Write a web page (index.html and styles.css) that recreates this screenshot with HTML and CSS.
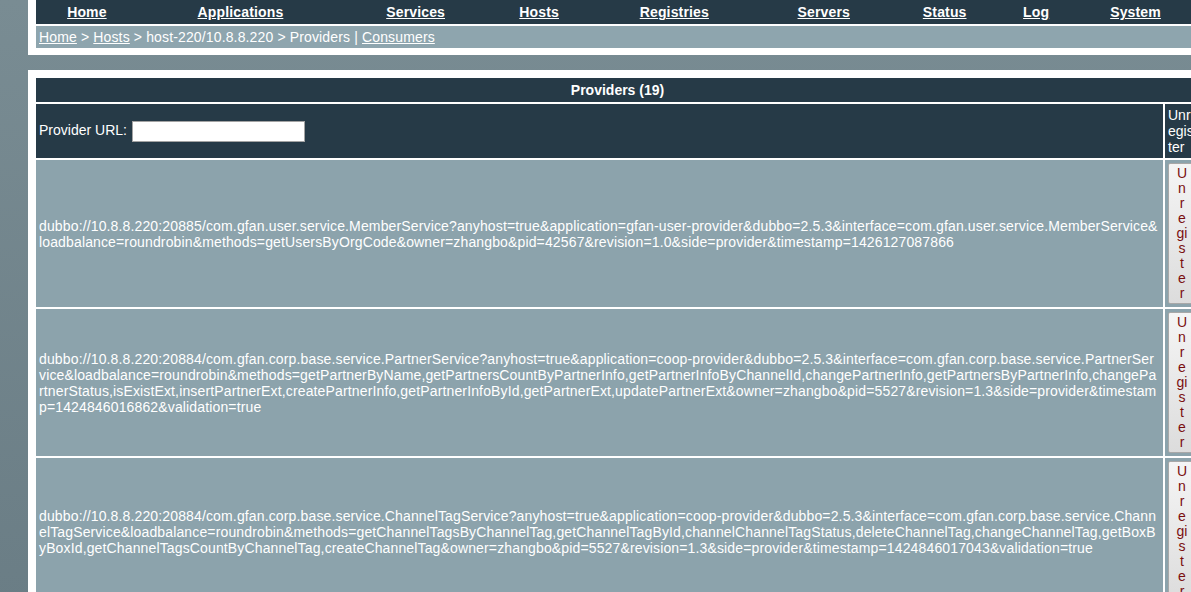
FILE: index.html
```html
<!DOCTYPE html>
<html>
<head>
<meta charset="utf-8">
<title>Providers</title>
<link rel="stylesheet" href="styles.css">
</head>
<body>
<div class="page">
  <div class="box top">
    <table class="nav">
      <tr>
        <td><a href="#">Home</a></td>
        <td><a href="#">Applications</a></td>
        <td><a href="#">Services</a></td>
        <td><a href="#">Hosts</a></td>
        <td><a href="#">Registries</a></td>
        <td><a href="#">Servers</a></td>
        <td><a href="#">Status</a></td>
        <td><a href="#">Log</a></td>
        <td><a href="#">System</a></td>
      </tr>
    </table>
    <div class="crumb"><a href="#">Home</a> &gt; <a href="#">Hosts</a> &gt; host-220/10.8.8.220 &gt; Providers | <a href="#">Consumers</a></div>
  </div>
  <div class="box main">
    <table class="list">
      <colgroup><col class="c-url"><col class="c-op"></colgroup>
      <thead>
        <tr><th colspan="2" class="title">Providers (19)</th></tr>
        <tr class="head">
          <td>Provider URL: <input type="text" class="filter"></td>
          <td class="op-head">Unregister</td>
        </tr>
      </thead>
      <tbody>
        <tr class="row">
          <td>dubbo://10.8.8.220:20885/com.gfan.user.service.MemberService?anyhost=true&amp;application=gfan-user-provider&amp;dubbo=2.5.3&amp;interface=com.gfan.user.service.MemberService&amp;loadbalance=roundrobin&amp;methods=getUsersByOrgCode&amp;owner=zhangbo&amp;pid=42567&amp;revision=1.0&amp;side=provider&amp;timestamp=1426127087866</td>
          <td><button class="btn">U<br>n<br>r<br>e<br>gi<br>s<br>t<br>e<br>r</button></td>
        </tr>
        <tr class="row">
          <td>dubbo://10.8.8.220:20884/com.gfan.corp.base.service.PartnerService?anyhost=true&amp;application=coop-provider&amp;dubbo=2.5.3&amp;interface=com.gfan.corp.base.service.PartnerService&amp;loadbalance=roundrobin&amp;methods=getPartnerByName,getPartnersCountByPartnerInfo,getPartnerInfoByChannelId,changePartnerInfo,getPartnersByPartnerInfo,changePartnerStatus,isExistExt,insertPartnerExt,createPartnerInfo,getPartnerInfoById,getPartnerExt,updatePartnerExt&amp;owner=zhangbo&amp;pid=5527&amp;revision=1.3&amp;side=provider&amp;timestamp=1424846016862&amp;validation=true</td>
          <td><button class="btn">U<br>n<br>r<br>e<br>gi<br>s<br>t<br>e<br>r</button></td>
        </tr>
        <tr class="row">
          <td>dubbo://10.8.8.220:20884/com.gfan.corp.base.service.ChannelTagService?anyhost=true&amp;application=coop-provider&amp;dubbo=2.5.3&amp;interface=com.gfan.corp.base.service.ChannelTagService&amp;loadbalance=roundrobin&amp;methods=getChannelTagsByChannelTag,getChannelTagById,channelChannelTagStatus,deleteChannelTag,changeChannelTag,getBoxByBoxId,getChannelTagsCountByChannelTag,createChannelTag&amp;owner=zhangbo&amp;pid=5527&amp;revision=1.3&amp;side=provider&amp;timestamp=1424846017043&amp;validation=true</td>
          <td><button class="btn">U<br>n<br>r<br>e<br>gi<br>s<br>t<br>e<br>r</button></td>
        </tr>
      </tbody>
    </table>
  </div>
</div>
</body>
</html>
```

FILE: styles.css
```css
html {
  overflow: hidden;
}

body {
  margin: 0;
  min-height: 100vh;
  background: linear-gradient(#798c93, #6a7d85);
  font-family: "Liberation Sans", Arial, sans-serif;
  font-size: 14px;
  color: #fff;
}

.page {
  margin-left: 28px;
  width: 1179px;
}

.box {
  background: #fff;
}

.top {
  padding: 0 8px 7px;
  margin-bottom: 15px;
}

.nav {
  width: 100%;
  height: 24px;
  border-collapse: collapse;
  background: #263a47;
}

.nav td {
  padding: 0 3px;
  text-align: center;
  font-weight: bold;
  letter-spacing: 0.15px;
}

.nav a {
  color: #fff;
}

.crumb {
  margin-top: 2px;
  height: 22px;
  line-height: 22px;
  padding-left: 3px;
  background: #8ea5ae;
  letter-spacing: 0.14px;
}

.crumb a {
  color: #fff;
}

.main {
  padding: 6px;
}

.list {
  width: 100%;
  table-layout: fixed;
  border-spacing: 2px;
}

.c-op {
  width: 34px;
}

.title {
  height: 24px;
  padding: 0;
  background: #263a47;
  font-weight: bold;
  text-align: center;
}

.head td {
  padding: 3px;
  background: #263a47;
  vertical-align: middle;
}

.op-head {
  word-break: break-all;
}

.filter {
  box-sizing: border-box;
  width: 173px;
  height: 21px;
  margin: 0 0 0 1px;
  border: 1px solid #a3a3a3;
  background: #fff;
  vertical-align: middle;
}

.row td {
  padding: 3px;
  background: #8ca3ac;
  word-break: break-all;
  vertical-align: middle;
  letter-spacing: 0.14px;
}

.btn {
  display: block;
  width: 28px;
  padding: 2px 0;
  border: 1px solid #a8a8a8;
  border-radius: 2px;
  background: linear-gradient(#f5f5f5, #dcdcdc);
  color: #7a0f0f;
  font-family: "Liberation Sans", Arial, sans-serif;
  font-size: 14px;
  line-height: 15px;
  letter-spacing: 0;
  text-align: center;
}
```
